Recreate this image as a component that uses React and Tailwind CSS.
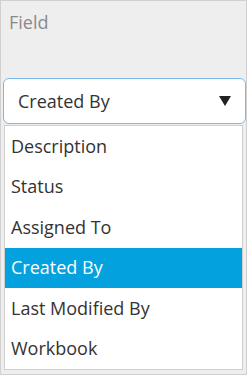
export default function App() {
  const items = ["Description", "Status", "Assigned To", "Created By", "Last Modified By", "Workbook"];
  return (
    <div className="w-[247px] h-[375px] border border-[#d0d0d0] bg-[#eeeeee] overflow-hidden" style={{ fontFamily: '"Open Sans", "Noto Sans", sans-serif' }}>
      <div className="pl-[8px] pt-[9px] h-[77px] text-[18px] leading-[24px] text-[#8a8a8a]">Field</div>
      <div className="ml-[2px] w-[243px] h-[46px] rounded-[6px] border border-[#7cb9ea] bg-white flex items-center justify-between pl-[14px] pr-[14px]">
        <span className="text-[18px] text-[#333333]">Created By</span>
        <svg width="12" height="10" viewBox="0 0 12 10"><path d="M0 0 H12 L6 10 Z" fill="#222" /></svg>
      </div>
      <div className="ml-[3px] mt-[1px] w-[239px] h-[245px] border border-[#cfcfcf] bg-white flex flex-col">
        {items.map((t) => (
          <div key={t} className={`h-[40.5px] flex items-center pl-[6px] text-[18px] ${t === "Created By" ? "bg-[#03a1de] text-white" : "text-[#333333]"}`}>{t}</div>
        ))}
      </div>
    </div>
  );
}
